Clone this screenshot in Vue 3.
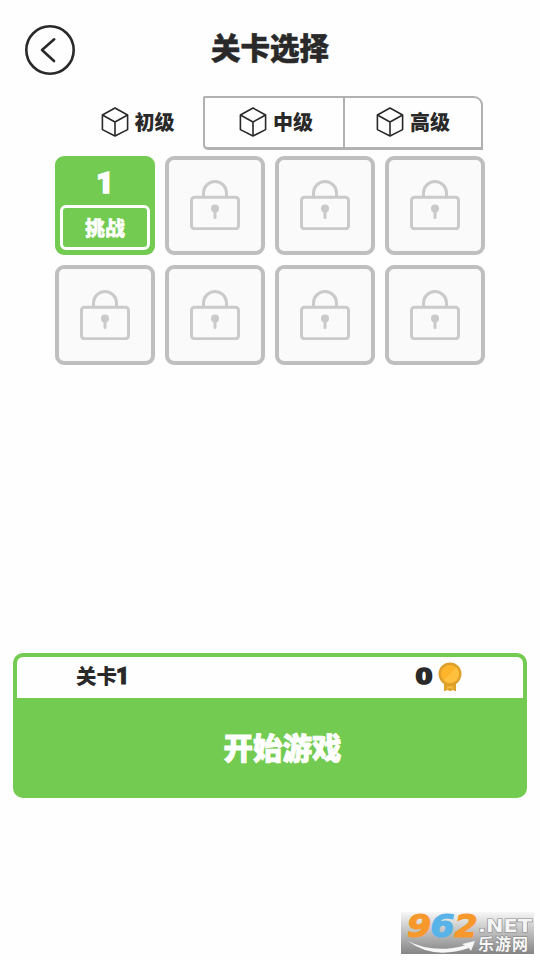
<script setup>
const tabs = ['初级', '中级', '高级']
const locked = [2, 3, 4, 5, 6, 7, 8]
</script>

<template>
  <main class="screen">
    <header class="header">
      <button class="back" aria-label="返回">
        <svg width="50" height="50" viewBox="0 0 50 50">
          <circle cx="25" cy="25" r="23.7" />
          <path d="M29.2 14.3 17 25l12 11" />
        </svg>
      </button>
      <h1 class="title">关卡选择</h1>
    </header>

    <nav class="tabs">
      <button v-for="(tab, i) in tabs" :key="tab" class="tab" :class="'tab-' + i">
        <svg class="cube" width="28" height="30" viewBox="0 0 28 30">
          <path d="M14 1 26.6 8v14.6L14 29 1.4 22.6V8Z" />
          <path d="M1.4 8 14 15 26.6 8M14 15v14" />
        </svg>
        <span>{{ tab }}</span>
      </button>
    </nav>

    <section class="grid">
      <div class="card open">
        <span class="number">1</span>
        <span class="challenge">挑战</span>
      </div>
      <div v-for="n in locked" :key="n" class="card locked">
        <svg width="50" height="50" viewBox="0 0 50 50">
          <path d="M13.5 17V13A11.5 11.5 0 0 1 36.5 13V17" />
          <rect x="1.5" y="17.2" width="47" height="31.5" rx="3" />
          <circle class="hole" cx="25" cy="28.5" r="4" />
          <path d="M25 29v8.5" stroke-linecap="round" />
        </svg>
      </div>
    </section>

    <section class="panel">
      <div class="info">
        <span class="level">关卡<span class="digit">1</span></span>
        <svg class="score" width="23" height="28" viewBox="0 0 23 28">
          <text x="0.5" y="21.5" textLength="17" lengthAdjust="spacingAndGlyphs">0</text>
        </svg>
        <svg class="medal" width="24" height="30" viewBox="0 0 24 30">
          <path d="M6 19h12v10.3l-3.5-1.3-2.5 1.3-2.5-1.3L6 29.3Z" fill="#dda02b" />
          <path d="M8.5 25h7M8.5 27l3.5-2 3.500 2" fill="none" stroke="#ffc13a" stroke-width="1" />
          <circle cx="12" cy="12" r="11.5" fill="#dda02b" />
          <circle cx="12" cy="12" r="9" fill="#ffb52b" />
          <path d="M18.4 5.6A9 9 0 0 1 5.6 18.4Z" fill="#ffc040" />
        </svg>
      </div>
      <button class="start">开始游戏</button>
    </section>

    <footer class="brand">
      <svg width="133" height="42" viewBox="0 0 133 42">
        <defs>
          <linearGradient id="brand-bg" x1="0" y1="0" x2="0" y2="1">
            <stop offset="0" stop-color="#f7f7f7" />
            <stop offset="0.5" stop-color="#bcbcbc" />
            <stop offset="1" stop-color="#858585" />
          </linearGradient>
        </defs>
        <rect width="133" height="42" fill="url(#brand-bg)" />
        <path class="swoosh" d="M7 29Q32 42 64 33.500L61 32 74 29 70 39 68 36Q32 48 7 29Z" />
        <g class="digits">
          <text class="orange" x="6" y="25" textLength="24" lengthAdjust="spacingAndGlyphs">9</text>
          <text class="blue" x="29.500" y="25" textLength="24" lengthAdjust="spacingAndGlyphs">6</text>
          <text class="orange" x="53.500" y="25" textLength="23" lengthAdjust="spacingAndGlyphs">2</text>
        </g>
        <text class="domain" x="77" y="20" textLength="54" lengthAdjust="spacingAndGlyphs">.NET</text>
        <text class="site" x="77" y="37.5" textLength="50">乐游网</text>
      </svg>
    </footer>
  </main>
</template>

<style>
body {
  margin: 0;
  background: #fefefe;
}
</style>

<style scoped>
* {
  box-sizing: border-box;
}
.screen {
  width: 540px;
  height: 960px;
  display: flex;
  flex-direction: column;
  background: #fefefe;
  color: #292929;
  font-family: "Noto Sans CJK SC", sans-serif;
  font-weight: 900;
  overflow: hidden;
}
button {
  font: inherit;
  color: inherit;
  background: none;
  border: 0;
  padding: 0;
}
.header {
  height: 96px;
  flex: none;
  display: grid;
  grid-template-columns: 75px 1fr 75px;
  padding-top: 25px;
}
.back {
  width: 50px;
  height: 50px;
  margin-left: 25px;
}
.back svg {
  display: block;
  fill: none;
  stroke: #292929;
  stroke-width: 2.6;
  stroke-linecap: round;
  stroke-linejoin: round;
}
.title {
  margin: 0;
  height: 42px;
  line-height: 42px;
  text-align: center;
  font-size: 29.5px;
  font-weight: 900;
  -webkit-text-stroke: 0.5px #292929;
}
.tabs {
  display: grid;
  grid-template-columns: 131px 140px 141px;
  height: 54px;
  flex: none;
  margin-left: 72px;
}
.tab {
  display: flex;
  align-items: center;
  justify-content: center;
  gap: 6px;
  font-size: 20px;
  line-height: 28px;
  padding-bottom: 2px;
}
.tab-1,
.tab-2 {
  border: solid #b1b1b1;
}
.tab-1 {
  border-width: 2px 0 3px 2px;
  border-radius: 2px 0 0 5px;
  padding: 0 0 1px 4px;
}
.tab-2 {
  width: 140px;
  border-width: 2px 2px 3px 2px;
  border-radius: 0 9px 0 0;
  padding: 0 0 1px;
}
.cube {
  fill: none;
  stroke: #292929;
  stroke-width: 1.6;
  stroke-linejoin: round;
}
.grid {
  flex: none;
  display: grid;
  grid-template-columns: repeat(4, 100px);
  grid-auto-rows: 99.5px;
  gap: 10px;
  margin: 5.5px 0 0 55px;
}
.card {
  border-radius: 9px;
}
.open {
  background: #73cb51;
  color: #fff;
  display: flex;
  flex-direction: column;
  align-items: center;
}
.number {
  height: 49.5px;
  line-height: 54px;
  font-family: Roboto, sans-serif;
  font-size: 30px;
  -webkit-text-stroke: 1.6px #fff;
}
.challenge {
  width: 90px;
  height: 45px;
  border: 3px solid #fff;
  border-radius: 6px;
  text-align: center;
  font-size: 20px;
  line-height: 40px;
  -webkit-text-stroke: 0.4px #fff;
}
.locked {
  border: 4px solid #bfbfbf;
  background: #fafafa;
  display: flex;
  align-items: center;
  justify-content: center;
}
.locked svg {
  fill: none;
  stroke: #cacaca;
  stroke-width: 3;
}
.locked .hole {
  fill: #cacaca;
  stroke: none;
}
.panel {
  flex: none;
  width: 514px;
  height: 145px;
  margin: 288.5px 0 0 13px;
  border: 4px solid #73cb51;
  border-radius: 10px;
  background: #73cb51;
}
.info {
  height: 41px;
  display: flex;
  align-items: center;
  background: #fefefe;
  border-radius: 6px 6px 0 0;
  padding-left: 59px;
}
.level {
  width: 339px;
  font-size: 20.5px;
  line-height: 38px;
  padding-bottom: 3px;
}
.digit {
  font-family: Roboto, sans-serif;
  font-size: 23px;
  margin-left: -1px;
  -webkit-text-stroke: 1px #292929;
}
.score {
  font: 700 21px "DejaVu Sans", sans-serif;
  fill: #292929;
  stroke: #292929;
  stroke-width: 1.6;
  margin-bottom: 3px;
  overflow: visible;
}
.medal {
  margin-bottom: 1px;
}
.start {
  display: block;
  width: 100%;
  height: 96px;
  color: #fff;
  text-align: center;
  padding: 0 0 0 25px;
  font-size: 29.5px;
  line-height: 96px;
  -webkit-text-stroke: 0.9px #fff;
}
.brand {
  margin: auto 6px 6px auto;
  height: 42px;
}
.brand svg {
  display: block;
  overflow: visible;
}
.digits {
  font: italic 700 32px "DejaVu Sans", sans-serif;
  stroke-width: 1.2;
}
.orange {
  fill: #f7982c;
  stroke: #f7982c;
}
.blue {
  fill: #58b4e8;
  stroke: #58b4e8;
}
.domain {
  font: 700 18px "DejaVu Sans", sans-serif;
  fill: #f5f5f5;
  stroke: #888;
  stroke-width: 1.2;
  paint-order: stroke;
}
.site {
  font: 700 16px "Noto Sans CJK SC", sans-serif;
  fill: #f7f7f7;
  stroke: #808080;
  stroke-width: 1;
  paint-order: stroke;
}
.swoosh {
  fill: #f7f7f7;
}
</style>
